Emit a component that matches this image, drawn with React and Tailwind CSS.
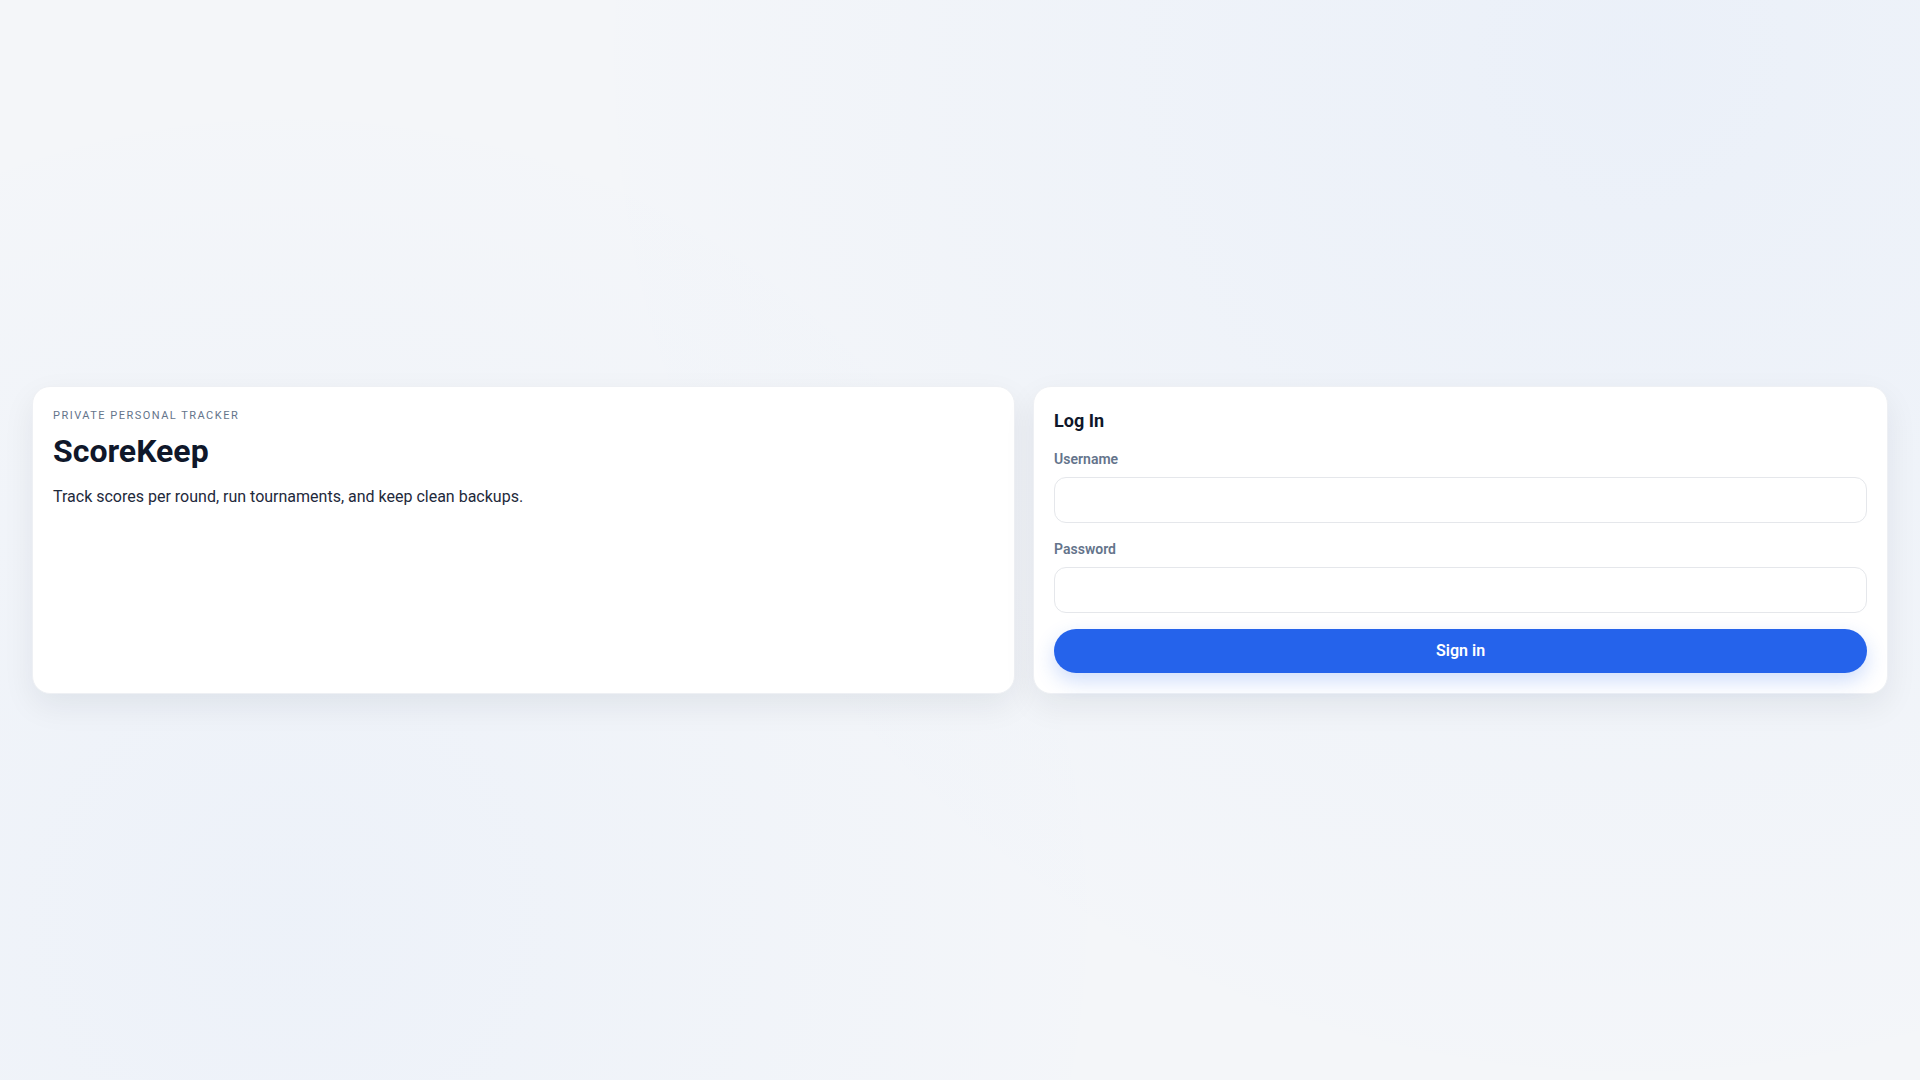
import React, { useState } from 'react';

const App = () => {
    const [username, setUsername] = useState('');
    const [password, setPassword] = useState('');

    return (
        <div className="min-h-screen w-full flex items-center px-8 bg-[#f4f6f9] bg-[radial-gradient(circle_at_85%_5%,rgba(59,130,246,0.05),transparent_55%),radial-gradient(circle_at_15%_85%,rgba(59,130,246,0.04),transparent_45%)] font-['Roboto','Liberation_Sans',sans-serif]">
            <div className="grid grid-cols-[1.15fr_1fr] gap-[18px] w-full items-stretch">

                {/* --- INTRO CARD --- */}
                <section className="bg-white rounded-[18px] border border-[#eef0f4] shadow-[0_12px_32px_rgba(15,23,42,0.07)] p-5">
                    <p className="text-[11px] leading-4 uppercase tracking-[0.135em] text-[#64748b] pt-px">Private Personal Tracker</p>
                    <h1 className="mt-2 text-[32px] leading-[38px] font-bold text-[#0f172a]">ScoreKeep</h1>
                    <p className="mt-[15px] text-[16px] leading-6 text-[#1e293b]">Track scores per round, run tournaments, and keep clean backups.</p>
                </section>

                {/* --- LOGIN CARD --- */}
                <section className="bg-white rounded-[18px] border border-[#eef0f4] shadow-[0_12px_32px_rgba(15,23,42,0.07)] p-5">
                    <h2 className="text-[18px] leading-7 font-bold text-[#0f172a] mb-[14px]">Log In</h2>
                    <form onSubmit={(e) => e.preventDefault()} className="flex flex-col">
                        <Field label="Username" type="text" value={username} onChange={setUsername} />
                        <div className="mt-4">
                            <Field label="Password" type="password" value={password} onChange={setPassword} />
                        </div>
                        <button
                            type="submit"
                            className="mt-4 h-11 w-full rounded-full bg-[#2563eb] text-white text-[16px] font-semibold shadow-[0_8px_20px_rgba(37,99,235,0.22)] outline-none"
                        >
                            Sign in
                        </button>
                    </form>
                </section>

            </div>
        </div>
    );
};

// Label + input pair
const Field = ({ label, type, value, onChange }) => (
    <label className="flex flex-col">
        <span className="text-[14px] leading-5 font-semibold text-[#64748b] mb-2">{label}</span>
        <input
            type={type}
            value={value}
            onChange={(e) => onChange(e.target.value)}
            className="h-[46px] w-full rounded-xl border border-[#e5e7eb] bg-white px-3 text-[15px] text-[#0f172a] outline-none"
        />
    </label>
);

export default App;
